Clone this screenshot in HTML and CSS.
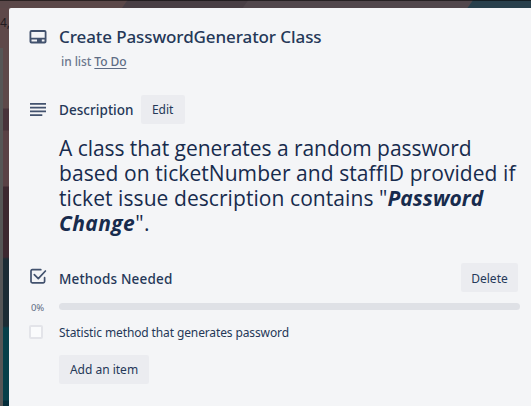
FILE: index.html
```html
<!DOCTYPE html>
<html lang="en">
<head>
<meta charset="utf-8">
<title>Create PasswordGenerator Class</title>
<link rel="stylesheet" href="styles.css">
</head>
<body>
<div class="board">
  <aside class="edge"><span class="edge-text">4,</span></aside>
  <main class="card">
    <header class="row title-row">
      <svg class="icon" width="18" height="14" viewBox="0 0 18 14"><path fill="#42526e" fill-rule="evenodd" d="M2.500 0h13A2 2 0 0 1 17.500 2v9.500a2 2 0 0 1-2 2h-13a2 2 0 0 1-2-2V2a2 2 0 0 1 2-2ZM2.300 2v5.800h13.400V2ZM2.500 9.600v2H8v-2Zm10.300 0v2h2.700v-2Z"/></svg>
      <h1>Create PasswordGenerator Class</h1>
    </header>
    <p class="list">in list <a>To Do</a></p>
    <section class="row desc-row">
      <svg class="icon" width="18" height="14" viewBox="0 0 18 14"><path fill="#42526e" d="M1 0h16v1.800H1zm0 3.800h16v1.800H1zm0 3.700h16v1.800H1zm0 3.700h12.300v1.800H1z"/></svg>
      <h2>Description</h2>
      <button class="edit">Edit</button>
    </section>
    <div class="copy">
      <div class="c1">A class that generates a random password</div>
      <div class="c2">based on ticketNumber and staffID provided if</div>
      <div class="c3">ticket issue description contains "<b>Password</b></div>
      <div class="c4"><b>Change</b>".</div>
    </div>
    <section class="row check-row">
      <svg class="icon check" width="18" height="17" viewBox="0 0 18 17"><path fill="none" stroke="#42526e" stroke-width="1.700" stroke-linecap="round" stroke-linejoin="round" d="M11.800 1.700H3.300Q2 1.700 2 3v10.500q0 1.300 1.300 1.300h11q1.300 0 1.300-1.300V9.700M5.300 6.700l4 4 7.100-7.700"/></svg>
      <h2 class="methods">Methods Needed</h2>
      <button class="delete">Delete</button>
    </section>
    <div class="row progress"><span class="pct">0%</span><div class="bar"></div></div>
    <div class="row item"><i class="box"></i><span>Statistic method that generates password</span></div>
    <button class="add">Add an item</button>
  </main>
</div>
</body>
</html>
```
FILE: styles.css
```css
* { box-sizing: border-box; }
body { margin: 0; font-family: "Noto Sans", sans-serif; color: #172b4d; }
.board {
  width: 531px; height: 406px; display: flex; padding-top: 8px; overflow: hidden;
  background:
    linear-gradient(#0008, #0008) 0 0 / 531px 1px no-repeat,
    linear-gradient(#565656, #565656) 0 48px / 3px 358px no-repeat,
    linear-gradient(125deg, #5b4849 0 104px, #493f45 105px 203px, #51474c 204px 387px, #28404c 388px) 0 0 / 531px 8px no-repeat,
    linear-gradient(#5e4849 0 108px, #48323a 109px 130px, #5a4145 131px 186px, #3d2830 187px 257px, #1c2c34 259px 326px, #06404a 328px 400px, #042d3a 401px);
}
.edge { width: 9px; flex: none; overflow: hidden; }
.edge-text { display: block; margin-top: 6px; font-size: 12px; line-height: 18px; color: #211b20; }
.card { width: 522px; background: #f4f5f7; border-top-left-radius: 2px; padding: 17px 11px 0 20px; flex: none; }
.row { display: flex; align-items: center; }
.icon { flex: none; width: 18px; margin-right: 12px; }
h1, h2, p { margin: 0; font-weight: 500; white-space: nowrap; }
h1 { font-size: 17px; line-height: 24px; letter-spacing: -.09px; color: #253858; }
h2 { font-size: 13.500px; line-height: 20px; color: #253858; letter-spacing: .05px; }
.title-row { height: 24px; }
.list { margin: 4px 0 0 32px; font-size: 12px; line-height: 18px; color: #6b778c; letter-spacing: -.07px; }
.list a { color: #5e6c84; text-decoration: underline; text-underline-offset: 2px; }
button { border: 0; padding: 0; border-radius: 2px; background: #ebecf0; color: #253858; font: 400 12px/29px "Noto Sans", sans-serif; height: 29px; white-space: nowrap; }
.desc-row { margin-top: 24px; height: 29px; }
.edit { width: 44px; margin-left: 7px; }
.copy { margin: 12px 0 0 30px; font-family: "Open Sans", sans-serif; font-size: 21px; line-height: 25px; white-space: nowrap; }
.copy b { font-weight: 700; font-style: italic; }
.c1 { letter-spacing: -.05px; }
.c2, .c3 { letter-spacing: .07px; }
.c4 { letter-spacing: .4px; }
.check-row { height: 29px; margin-top: 27px; }
.check { margin-top: -3px; }
.methods { margin-top: 2px; letter-spacing: .18px; }
.delete { width: 57px; margin: 0 2px 0 auto; padding-top: 1px; }
.progress { margin-top: 10px; height: 9px; }
.pct { width: 30px; padding: 1px 0 0 2px; font-size: 9.500px; letter-spacing: -.2px; color: #5e6c84; flex: none; }
.bar { flex: 1; height: 7px; border-radius: 4px; background: #dfe1e6; }
.item { margin-top: 11px; height: 20px; font-size: 12px; color: #253858; letter-spacing: -.12px; white-space: nowrap; }
.box { width: 14px; height: 14px; border: 2px solid #e3e4e9; border-radius: 2px; background: #fafbfc; margin-right: 16px; }
.add { display: block; width: 90px; margin: 13px 0 0 30px; }
```
